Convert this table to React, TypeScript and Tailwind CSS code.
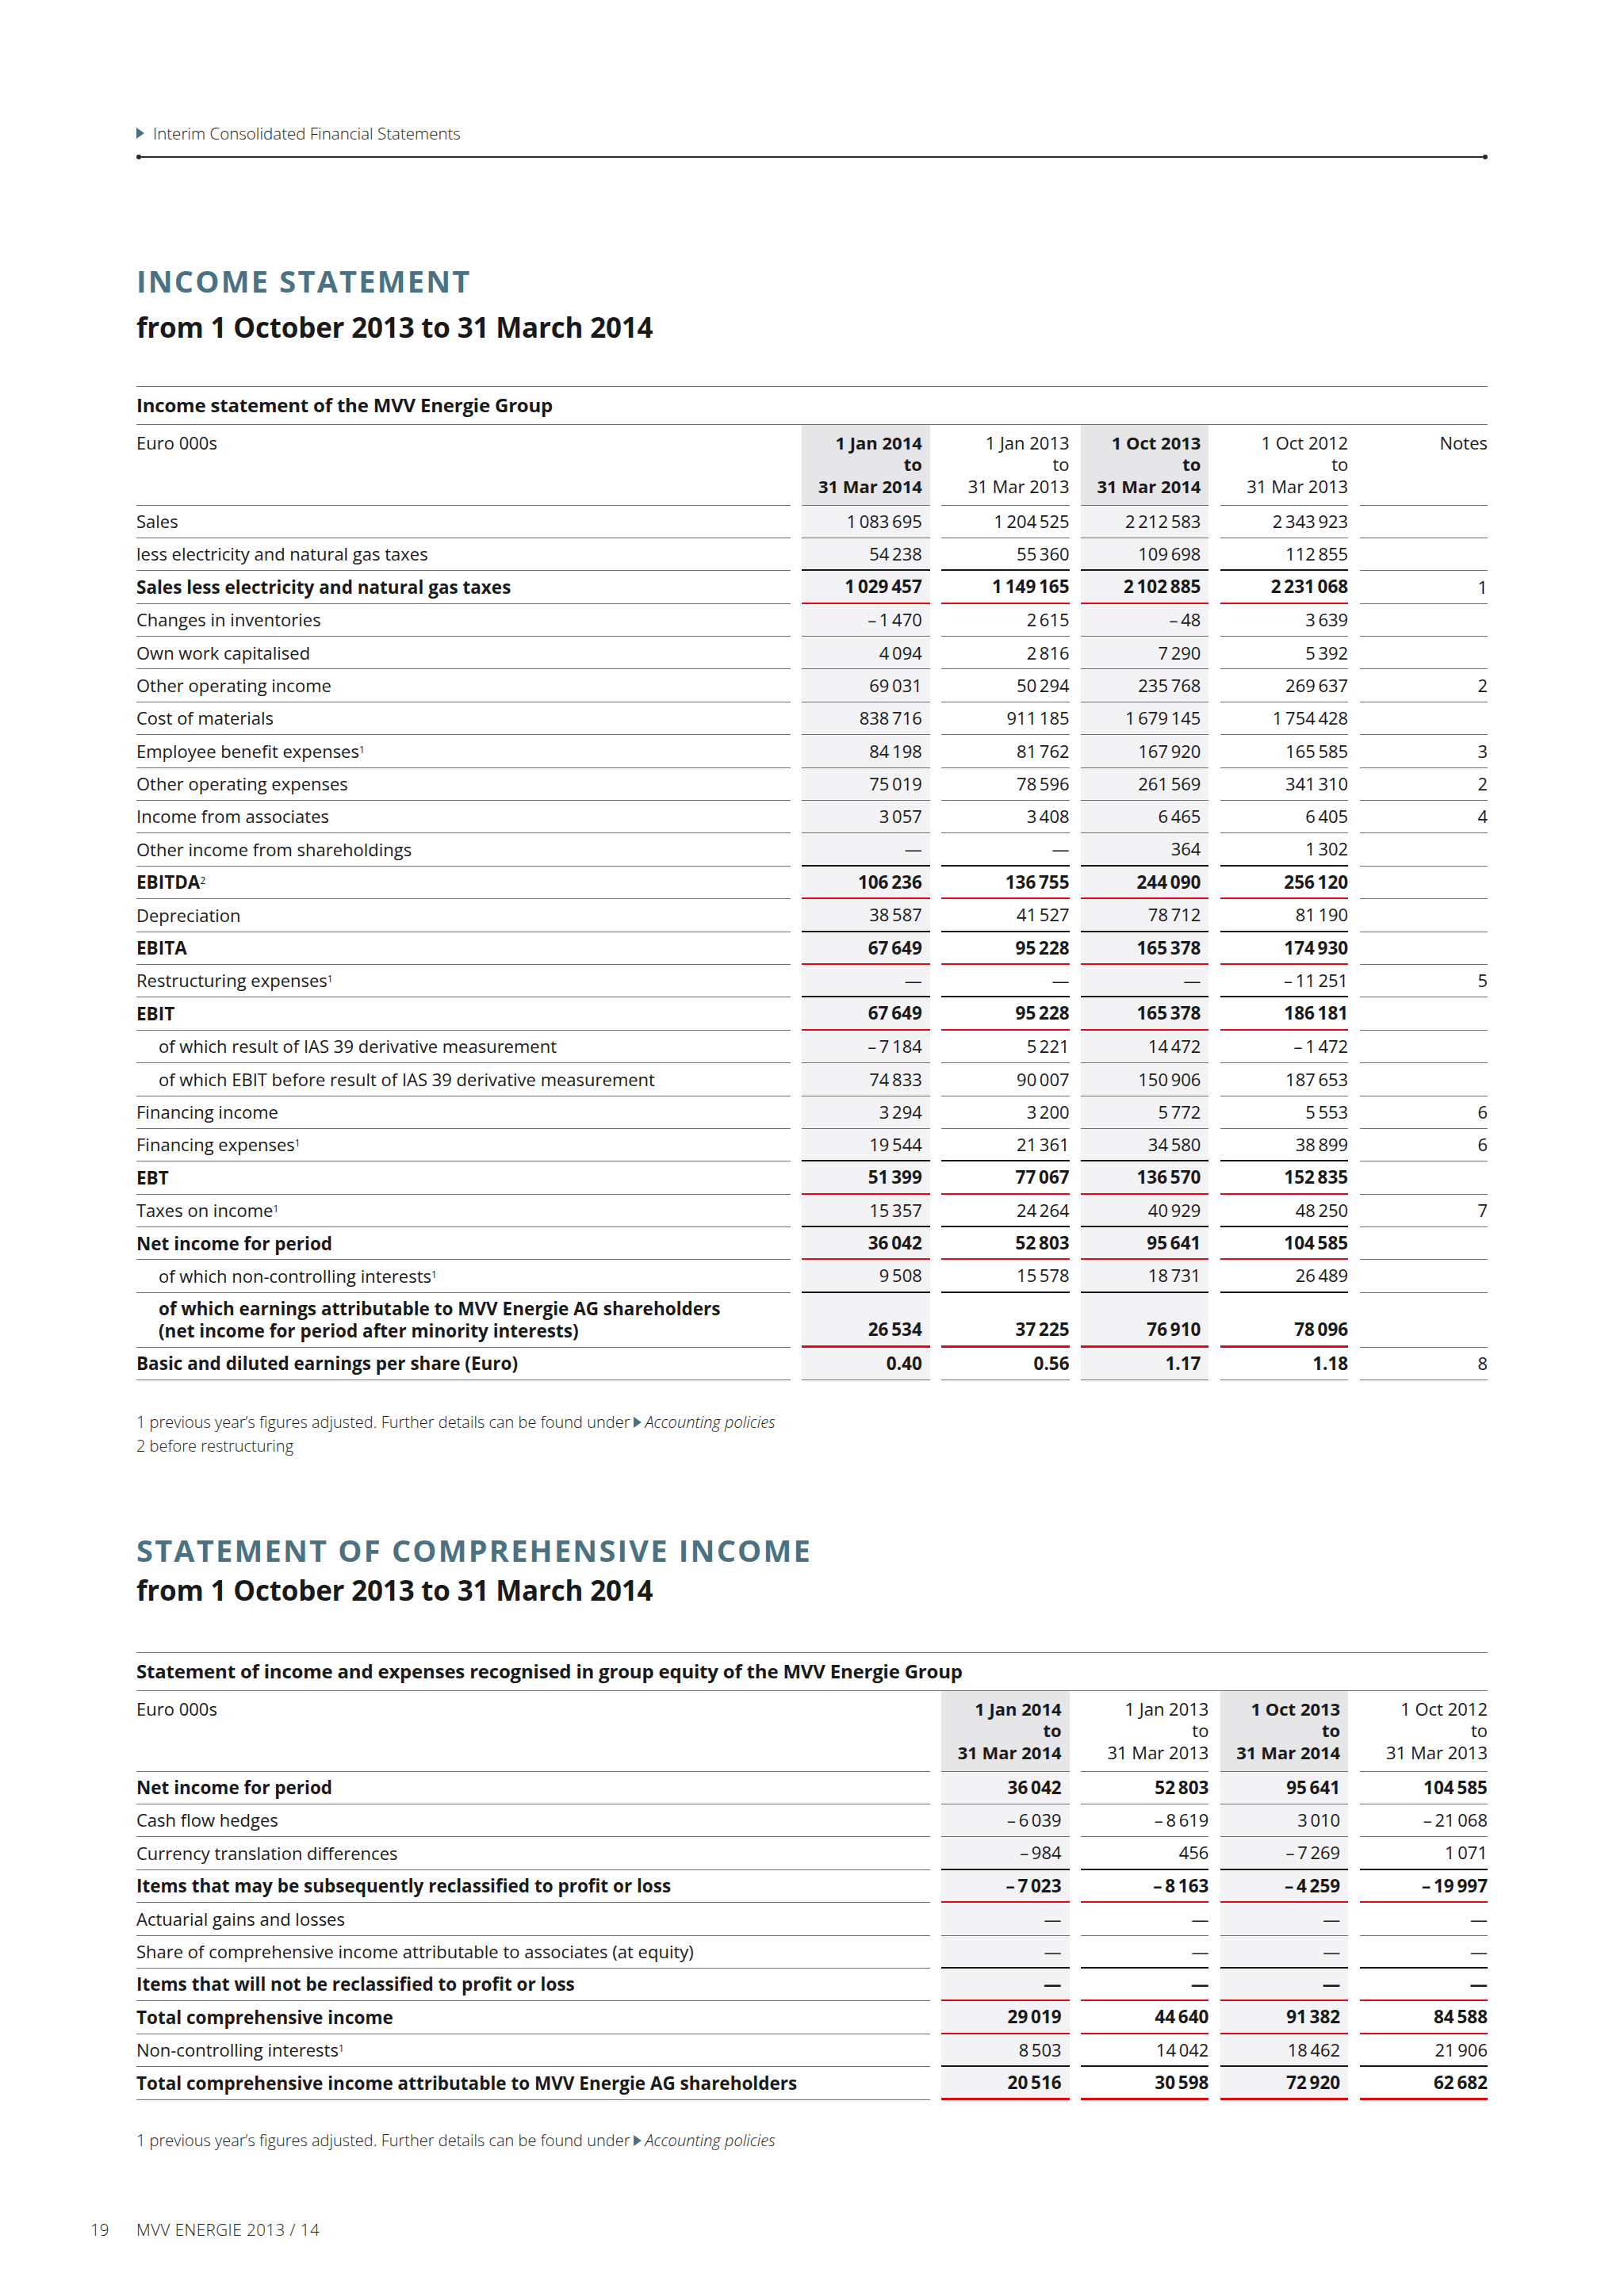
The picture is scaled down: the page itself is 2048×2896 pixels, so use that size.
import React from 'react'

type Line = 'g' | 'k' | 'r' | 'R'

type Row = {
  label: string
  label2?: string
  sup?: string
  vals: string[]
  note?: string
  bold?: boolean
  indent?: boolean
  b: Line
}

const lineCls: Record<Line, string> = {
  g: 'border-b-[1.5px] border-[#707070]',
  k: 'border-b-2 border-[#161616]',
  r: 'border-b-2 border-[#e30613]',
  R: 'border-b-[3px] border-[#e30613]',
}

const incomeRows: Row[] = [
  { label: 'Sales', vals: ['1 083 695', '1 204 525', '2 212 583', '2 343 923'], b: 'g' },
  { label: 'less electricity and natural gas taxes', vals: ['54 238', '55 360', '109 698', '112 855'], b: 'k' },
  { label: 'Sales less electricity and natural gas taxes', vals: ['1 029 457', '1 149 165', '2 102 885', '2 231 068'], note: '1', bold: true, b: 'r' },
  { label: 'Changes in inventories', vals: ['– 1 470', '2 615', '– 48', '3 639'], b: 'g' },
  { label: 'Own work capitalised', vals: ['4 094', '2 816', '7 290', '5 392'], b: 'g' },
  { label: 'Other operating income', vals: ['69 031', '50 294', '235 768', '269 637'], note: '2', b: 'g' },
  { label: 'Cost of materials', vals: ['838 716', '911 185', '1 679 145', '1 754 428'], b: 'g' },
  { label: 'Employee benefit expenses', sup: '1', vals: ['84 198', '81 762', '167 920', '165 585'], note: '3', b: 'g' },
  { label: 'Other operating expenses', vals: ['75 019', '78 596', '261 569', '341 310'], note: '2', b: 'g' },
  { label: 'Income from associates', vals: ['3 057', '3 408', '6 465', '6 405'], note: '4', b: 'g' },
  { label: 'Other income from shareholdings', vals: ['—', '—', '364', '1 302'], b: 'k' },
  { label: 'EBITDA', sup: '2', vals: ['106 236', '136 755', '244 090', '256 120'], bold: true, b: 'r' },
  { label: 'Depreciation', vals: ['38 587', '41 527', '78 712', '81 190'], b: 'k' },
  { label: 'EBITA', vals: ['67 649', '95 228', '165 378', '174 930'], bold: true, b: 'r' },
  { label: 'Restructuring expenses', sup: '1', vals: ['—', '—', '—', '– 11 251'], note: '5', b: 'k' },
  { label: 'EBIT', vals: ['67 649', '95 228', '165 378', '186 181'], bold: true, b: 'r' },
  { label: 'of which result of IAS 39 derivative measurement', vals: ['– 7 184', '5 221', '14 472', '– 1 472'], indent: true, b: 'g' },
  { label: 'of which EBIT before result of IAS 39 derivative measurement', vals: ['74 833', '90 007', '150 906', '187 653'], indent: true, b: 'g' },
  { label: 'Financing income', vals: ['3 294', '3 200', '5 772', '5 553'], note: '6', b: 'g' },
  { label: 'Financing expenses', sup: '1', vals: ['19 544', '21 361', '34 580', '38 899'], note: '6', b: 'k' },
  { label: 'EBT', vals: ['51 399', '77 067', '136 570', '152 835'], bold: true, b: 'r' },
  { label: 'Taxes on income', sup: '1', vals: ['15 357', '24 264', '40 929', '48 250'], note: '7', b: 'k' },
  { label: 'Net income for period', vals: ['36 042', '52 803', '95 641', '104 585'], bold: true, b: 'r' },
  { label: 'of which non-controlling interests', sup: '1', vals: ['9 508', '15 578', '18 731', '26 489'], indent: true, b: 'k' },
  {
    label: 'of which earnings attributable to MVV Energie AG shareholders',
    label2: '(net income for period after minority interests)',
    vals: ['26 534', '37 225', '76 910', '78 096'],
    indent: true,
    bold: true,
    b: 'R',
  },
  { label: 'Basic and diluted earnings per share (Euro)', vals: ['0.40', '0.56', '1.17', '1.18'], note: '8', bold: true, b: 'g' },
]

const equityRows: Row[] = [
  { label: 'Net income for period', vals: ['36 042', '52 803', '95 641', '104 585'], bold: true, b: 'g' },
  { label: 'Cash flow hedges', vals: ['– 6 039', '– 8 619', '3 010', '– 21 068'], b: 'g' },
  { label: 'Currency translation differences', vals: ['– 984', '456', '– 7 269', '1 071'], b: 'k' },
  { label: 'Items that may be subsequently reclassified to profit or loss', vals: ['– 7 023', '– 8 163', '– 4 259', '– 19 997'], bold: true, b: 'r' },
  { label: 'Actuarial gains and losses', vals: ['—', '—', '—', '—'], b: 'g' },
  { label: 'Share of comprehensive income attributable to associates (at equity)', vals: ['—', '—', '—', '—'], b: 'k' },
  { label: 'Items that will not be reclassified to profit or loss', vals: ['—', '—', '—', '—'], bold: true, b: 'r' },
  { label: 'Total comprehensive income', vals: ['29 019', '44 640', '91 382', '84 588'], bold: true, b: 'r' },
  { label: 'Non-controlling interests', sup: '1', vals: ['8 503', '14 042', '18 462', '21 906'], b: 'k' },
  { label: 'Total comprehensive income attributable to MVV Energie AG shareholders', vals: ['20 516', '30 598', '72 920', '62 682'], bold: true, b: 'R' },
]

const periods = [
  { from: '1 Jan 2014', to: '31 Mar 2014', hi: true },
  { from: '1 Jan 2013', to: '31 Mar 2013', hi: false },
  { from: '1 Oct 2013', to: '31 Mar 2014', hi: true },
  { from: '1 Oct 2012', to: '31 Mar 2013', hi: false },
]

const thin = (s: string) => s.replace(/ /g, '\u2009')

function Arrow({ className }: { className?: string }) {
  return (
    <svg viewBox="0 0 10 14" className={className}>
      <path d="M0 0 L10 7 L0 14 Z" fill="#4a7282" />
    </svg>
  )
}

function SectionTitle({ title, gap }: { title: string; gap: string }) {
  return (
    <div className="flex flex-col">
      <h1 className="text-[38px] leading-[46px] font-bold tracking-[2.2px] text-[#4a7282]">{title}</h1>
      <h2 className={`${gap} text-[35px] leading-[42px] font-bold tracking-[-0.2px] text-[#1a1a1a]`}>
        from 1 October 2013 to 31 March 2014
      </h2>
    </div>
  )
}

function Table({ caption, rows, notes }: { caption: string; rows: Row[]; notes: boolean }) {
  const cols = notes
    ? 'grid-cols-[1fr_repeat(5,161.5px)]'
    : 'grid-cols-[1fr_repeat(4,161.5px)]'
  return (
    <div className="flex flex-col text-[22px] text-[#1a1a1a]">
      <div className="h-[48.5px] flex items-center border-y-[1.5px] border-[#707070] text-[24px] font-bold tracking-[-0.2px]">
        {caption}
      </div>
      <div className={`grid ${cols} gap-x-[14.3px]`}>
        <div className="h-[102px] pt-[9px] leading-[27.5px] font-normal border-b-[1.5px] border-[#707070]">
          Euro 000s
        </div>
        {periods.map((p) => (
          <div
            key={p.from}
            className={`h-[102px] pt-[9px] leading-[27.5px] text-right border-b-[1.5px] border-[#707070] flex flex-col ${
              p.hi ? 'bg-[#e6e6e9] pr-[10px] font-bold' : 'font-normal'
            }`}
          >
            <span>{p.from}</span>
            <span>to</span>
            <span>{p.to}</span>
          </div>
        ))}
        {notes && (
          <div className="h-[102px] pt-[9px] leading-[27.5px] text-right font-normal border-b-[1.5px] border-[#707070]">
            Notes
          </div>
        )}

        {rows.map((r) => {
          const h = r.label2 ? 'h-[68.9px]' : 'h-[41.4px]'
          const w = r.bold ? 'font-bold text-[22.5px]' : 'font-normal'
          return (
            <React.Fragment key={r.label}>
              <div
                className={`${h} flex flex-col justify-center leading-[27.5px] ${w} border-b-[1.5px] border-[#707070] ${
                  r.indent ? 'pl-[28px]' : ''
                }`}
              >
                <span>
                  {r.label}
                  {r.sup && <sup className="text-[12px] font-normal">{r.sup}</sup>}
                </span>
                {r.label2 && <span>{r.label2}</span>}
              </div>
              {r.vals.map((v, i) => (
                <div
                  key={i}
                  className={`${h} flex ${r.label2 ? 'items-end pb-[6px]' : 'items-center'} justify-end leading-[27.5px] tabular-nums ${w} ${
                    lineCls[r.b]
                  } ${periods[i].hi ? 'bg-[#f3f3f5] pr-[10px]' : ''}`}
                >
                  {thin(v)}
                </div>
              ))}
              {notes && (
                <div
                  className={`${h} flex items-center justify-end leading-[27.5px] font-normal border-b-[1.5px] border-[#707070]`}
                >
                  {r.note ?? ''}
                </div>
              )}
            </React.Fragment>
          )
        })}
      </div>
    </div>
  )
}

function PolicyNote() {
  return (
    <div className="flex items-center">
      <span>1 previous year’s figures adjusted. Further details can be found under</span>
      <Arrow className="w-[10px] h-[14px] ml-[5px] mr-[4px]" />
      <span className="italic">Accounting policies</span>
    </div>
  )
}

export default function App() {
  return (
    <div
      className="w-[2048px] min-h-[2896px] bg-white flex flex-col text-[#1a1a1a]"
      style={{ fontFamily: '"Open Sans", "Noto Sans", sans-serif' }}
    >
      <div className="pl-[172px] pr-[172px] pt-[154px] flex flex-col">
        <div className="flex items-center h-[28px] text-[20.5px] font-light">
          <Arrow className="w-[10px] h-[14px] mr-[11px]" />
          <span>Interim Consolidated Financial Statements</span>
        </div>

        <div className="mt-[13px] flex items-center">
          <span className="w-[6px] h-[6px] rounded-full bg-[#2a2a2a]" />
          <span className="flex-1 h-[2px] bg-[#2a2a2a]" />
          <span className="w-[6px] h-[6px] rounded-full bg-[#2a2a2a]" />
        </div>

        <div className="mt-[130px]">
          <SectionTitle title="INCOME STATEMENT" gap="mt-[15px]" />
        </div>

        <div className="mt-[53px]">
          <Table caption="Income statement of the MVV Energie Group" rows={incomeRows} notes />
        </div>

        <div className="mt-[38px] flex flex-col text-[20px] leading-[30px] font-light">
          <PolicyNote />
          <span>2 before restructuring</span>
        </div>

        <div className="mt-[92.5px]">
          <SectionTitle title="STATEMENT OF COMPREHENSIVE INCOME" gap="mt-[7.5px]" />
        </div>

        <div className="mt-[57px]">
          <Table
            caption="Statement of income and expenses recognised in group equity of the MVV Energie Group"
            rows={equityRows}
            notes={false}
          />
        </div>

        <div className="mt-[36px] text-[20px] leading-[30px] font-light">
          <PolicyNote />
        </div>
      </div>

      <div className="pl-[114px] mt-[82px] flex items-center text-[20.5px] leading-[30px] font-light">
        <span className="w-[58px]">19</span>
        <span className="tracking-[0.5px]">MVV ENERGIE 2013 / 14</span>
      </div>
    </div>
  )
}
